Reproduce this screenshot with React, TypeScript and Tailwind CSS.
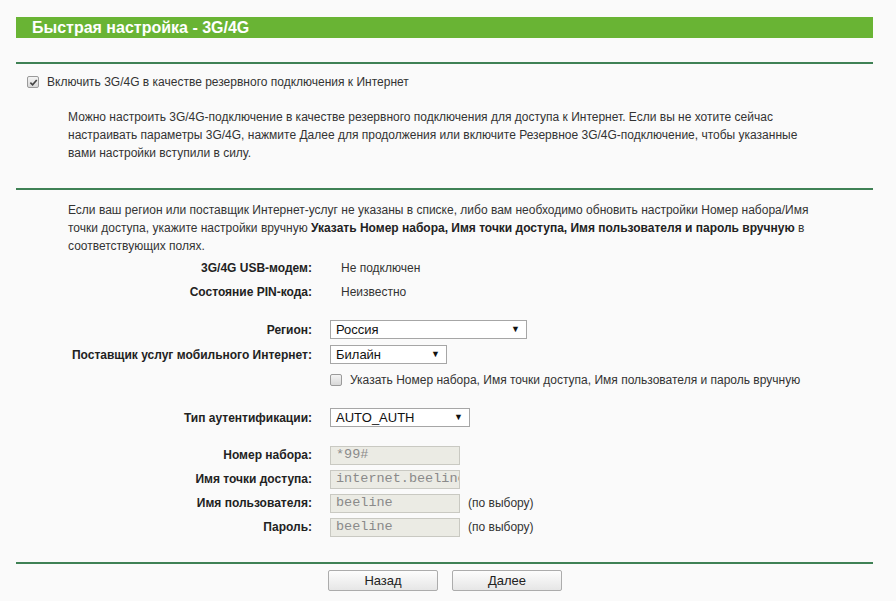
import React from 'react';

const Sep = ({ className = '' }: { className?: string }) => (
    <div className={`h-[2px] bg-[#3f8155] ${className}`} />
);

const Box = ({ checked }: { checked?: boolean }) => (
    <span className="inline-flex w-[12px] h-[12px] shrink-0 items-center justify-center rounded-[2px] border border-[#9a9a9a] bg-gradient-to-b from-[#f4f4f4] to-[#d8d8d8]">
        {checked && (
            <svg viewBox="0 0 10 10" className="w-[9px] h-[9px]">
                <path d="M1.5 5.2 L4 7.6 L8.6 2.2" fill="none" stroke="#444" strokeWidth="1.8" />
            </svg>
        )}
    </span>
);

const Select = ({ value, width }: { value: string; width: string }) => (
    <div className={`${width} h-[19px] flex items-center justify-between border border-[#a6a6a6] bg-white pl-[5px] pr-[6px] text-[13px] text-[#111]`}>
        <span>{value}</span>
        <span className="text-[9px] leading-none">▼</span>
    </div>
);

const Field = ({ value }: { value: string }) => (
    <div className="w-[130px] h-[19px] flex items-center overflow-hidden whitespace-nowrap border border-[#c9c9c2] bg-[#ebebe4] pl-[5px] text-[13.5px] text-[#8a8a8a] font-['Liberation_Mono',monospace]">
        {value}
    </div>
);

const Row = ({ label, children, h = 'h-[24px]' }: { label: string; children: React.ReactNode; h?: string }) => (
    <div className={`flex items-center ${h}`}>
        <div className="w-[296px] text-right font-bold text-[#222]">{label}</div>
        <div className="pl-[18px] flex items-center gap-[8px]">{children}</div>
    </div>
);

export default function App() {
    return (
        <div className="min-h-[601px] bg-[#fafafa] font-['Liberation_Sans',Arial,sans-serif] text-[12px] text-[#333] pt-[17px]">
            <div className="ml-[16px] w-[857px]">
                <div className="h-[21px] bg-[#69b434] pl-[16px] flex items-center text-[16px] font-bold text-white">
                    Быстрая настройка - 3G/4G
                </div>
                <Sep className="mt-[24px]" />
                <div className="mt-[11px] pl-[11px] flex items-center gap-[8px] h-[14px]">
                    <Box checked />
                    <span>Включить 3G/4G в качестве резервного подключения к Интернет</span>
                </div>
                <p className="mt-[19px] ml-[52px] w-[760px] leading-[18px]">
                    Можно настроить 3G/4G-подключение в качестве резервного подключения для доступа к Интернет. Если вы не хотите сейчас
                    настраивать параметры 3G/4G, нажмите Далее для продолжения или включите Резервное 3G/4G-подключение, чтобы указанные
                    вами настройки вступили в силу.
                </p>
                <Sep className="mt-[26px]" />
                <p className="mt-[11px] ml-[52px] w-[760px] leading-[18px]">
                    Если ваш регион или поставщик Интернет-услуг не указаны в списке, либо вам необходимо обновить настройки Номер набора/Имя
                    точки доступа, укажите настройки вручную{' '}
                    <b className="text-[#222]">Указать Номер набора, Имя точки доступа, Имя пользователя и пароль вручную</b> в
                    соответствующих полях.
                </p>
                <div className="mt-[1px]">
                    <Row label="3G/4G USB-модем:">
                        <span className="pl-[11px]">Не подключен</span>
                    </Row>
                    <Row label="Состояние PIN-кода:">
                        <span className="pl-[11px]">Неизвестно</span>
                    </Row>
                </div>
                <div className="mt-[13px]">
                    <Row label="Регион:" h="h-[25px]">
                        <Select value="Россия" width="w-[197px]" />
                    </Row>
                    <Row label="Поставщик услуг мобильного Интернет:" h="h-[25px]">
                        <Select value="Билайн" width="w-[117px]" />
                    </Row>
                    <div className="flex items-center h-[25px] pl-[314px] gap-[8px]">
                        <Box />
                        <span>Указать Номер набора, Имя точки доступа, Имя пользователя и пароль вручную</span>
                    </div>
                </div>
                <div className="mt-[13px]">
                    <Row label="Тип аутентификации:" h="h-[25px]">
                        <Select value="AUTO_AUTH" width="w-[140px]" />
                    </Row>
                </div>
                <div className="mt-[13px]">
                    <Row label="Номер набора:">
                        <Field value="*99#" />
                    </Row>
                    <Row label="Имя точки доступа:">
                        <Field value="internet.beeline.ru" />
                    </Row>
                    <Row label="Имя пользователя:">
                        <Field value="beeline" />
                        <span>(по выбору)</span>
                    </Row>
                    <Row label="Пароль:">
                        <Field value="beeline" />
                        <span>(по выбору)</span>
                    </Row>
                </div>
                <Sep className="mt-[23px]" />
                <div className="mt-[6px] flex gap-[14px] pl-[312px]">
                    <button className="w-[110px] h-[21px] rounded-[2px] border border-[#acacac] bg-gradient-to-b from-[#fdfdfd] to-[#e6e6e6] text-[13px] text-[#222]">
                        Назад
                    </button>
                    <button className="w-[110px] h-[21px] rounded-[2px] border border-[#acacac] bg-gradient-to-b from-[#fdfdfd] to-[#e6e6e6] text-[13px] text-[#222]">
                        Далее
                    </button>
                </div>
            </div>
        </div>
    );
}
